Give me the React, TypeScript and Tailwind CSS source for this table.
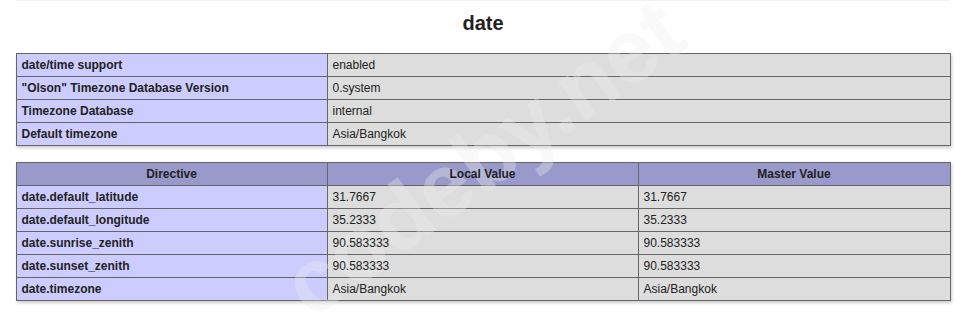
import React from "react";

const font = { fontFamily: '"Liberation Sans", Arial, sans-serif' };

const info: [string, string][] = [
  ["date/time support", "enabled"],
  ['"Olson" Timezone Database Version', "0.system"],
  ["Timezone Database", "internal"],
  ["Default timezone", "Asia/Bangkok"],
];

const directives: [string, string, string][] = [
  ["date.default_latitude", "31.7667", "31.7667"],
  ["date.default_longitude", "35.2333", "35.2333"],
  ["date.sunrise_zenith", "90.583333", "90.583333"],
  ["date.sunset_zenith", "90.583333", "90.583333"],
  ["date.timezone", "Asia/Bangkok", "Asia/Bangkok"],
];

const cell = "border border-[#666] text-[12px] leading-[14px] h-[23px] px-[5px] py-0 align-middle text-[#222]";

function T({ children }: { children: React.ReactNode }) {
  return <span className="relative z-10">{children}</span>;
}

export default function App() {
  return (
    <div className="relative w-full h-[315px] bg-white overflow-hidden" style={font}>
      <div className="mx-auto w-[934px] h-px bg-[#f1f1f1]" />
      <h2 className="mt-[11px] h-[23px] leading-[23px] text-[20px] font-bold text-center text-[#222]">
        <T>date</T>
      </h2>
      <table className="mx-auto mt-[18px] w-[934px] table-fixed border-collapse shadow-[1px_2px_3px_#ccc]">
        <colgroup>
          <col className="w-[311px]" />
          <col className="w-[623px]" />
        </colgroup>
        <tbody>
          {info.map(([k, v]) => (
            <tr key={k}>
              <td className={`${cell} bg-[#ccf] font-bold`}><T>{k}</T></td>
              <td className={`${cell} bg-[#ddd]`}><T>{v}</T></td>
            </tr>
          ))}
        </tbody>
      </table>
      <table className="mx-auto mt-[16px] w-[934px] table-fixed border-collapse shadow-[1px_2px_3px_#ccc]">
        <colgroup>
          <col className="w-[311px]" />
          <col className="w-[311px]" />
          <col className="w-[312px]" />
        </colgroup>
        <tbody>
          <tr>
            <th className={`${cell} bg-[#99c] font-bold text-center`}><T>Directive</T></th>
            <th className={`${cell} bg-[#99c] font-bold text-center`}><T>Local Value</T></th>
            <th className={`${cell} bg-[#99c] font-bold text-center`}><T>Master Value</T></th>
          </tr>
          {directives.map(([k, l, m]) => (
            <tr key={k}>
              <td className={`${cell} bg-[#ccf] font-bold`}><T>{k}</T></td>
              <td className={`${cell} bg-[#ddd]`}><T>{l}</T></td>
              <td className={`${cell} bg-[#ddd]`}><T>{m}</T></td>
            </tr>
          ))}
        </tbody>
      </table>
      <div className="pointer-events-none absolute z-[5] left-[483px] top-[158px] -translate-x-1/2 -translate-y-1/2 -rotate-[36deg] whitespace-nowrap text-[90px] font-bold text-[#eeeeee] opacity-35">
        codeby.net
      </div>
    </div>
  );
}
